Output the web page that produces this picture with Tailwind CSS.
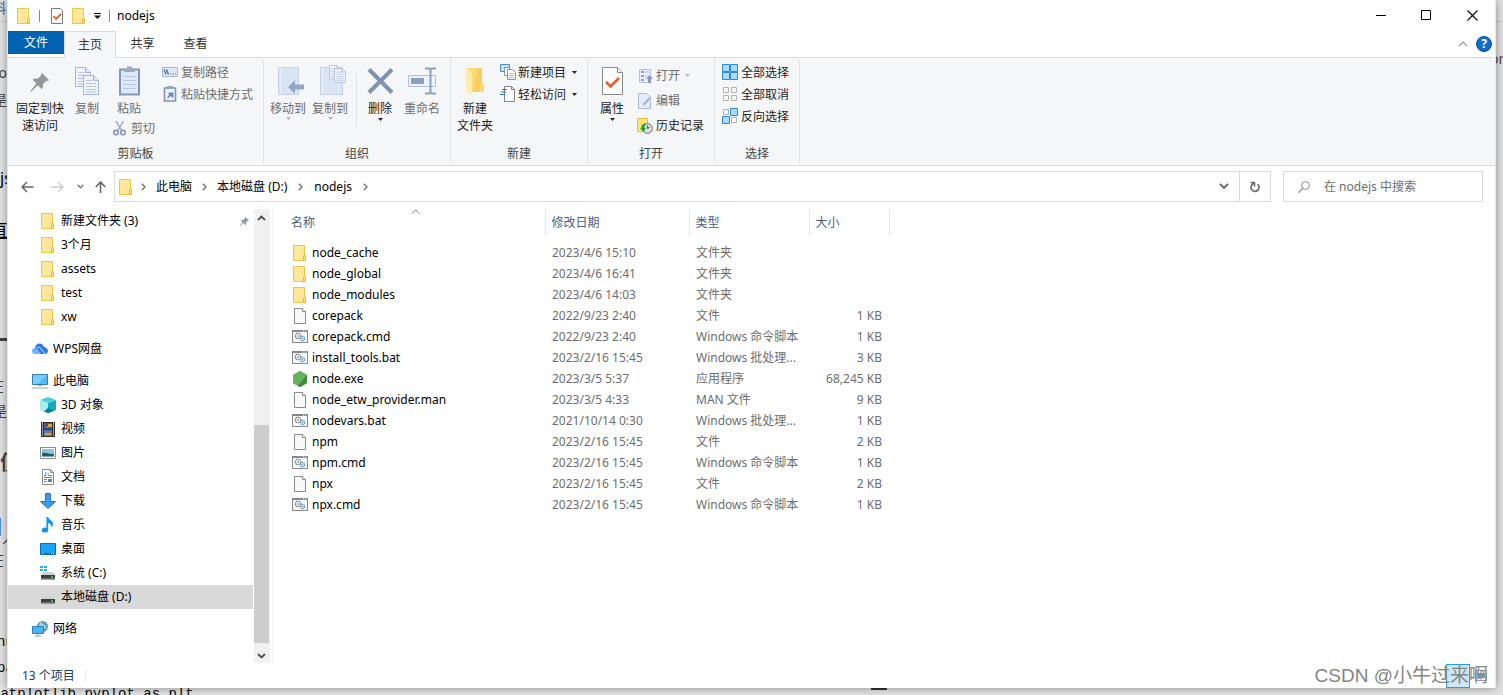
<!DOCTYPE html>
<html lang="zh-CN">
<head>
<meta charset="utf-8">
<title>nodejs</title>
<script src="https://cdn.jsdelivr.net/npm/@tailwindcss/browser@4"></script>
</head>
<body class="bg-[#e4e4e4] font-['Noto_Sans','Noto_Sans_CJK_SC',sans-serif] text-[12px] leading-4 text-black">

<!-- shared icons -->
<svg class="hidden" aria-hidden="true">
  <symbol id="folder" viewBox="0 0 16 16"><path d="M1.500.5h11v10h1v5h-12z" fill="#ffe699" stroke="#eac54f"/><path d="M11.500 15.500v-4l1-1.500 1 1.500v4z" fill="#ffe083" stroke="#e6b93a"/></symbol>
  <symbol id="file" viewBox="0 0 16 16"><path d="M2.500.5h8l3 3v12h-11z" fill="#f8f8f8" stroke="#8a8a8a"/><path d="M10.500.5v3h3" fill="#fff" stroke="#8a8a8a"/></symbol>
  <symbol id="cmd" viewBox="0 0 16 16"><path d="M.5 1.500h15v12H.5z" fill="#f6f7f8" stroke="#85898d"/><path d="M0 1h16v2H0z" fill="#85898d"/><path d="M11 2h1M13 2h1" stroke="#fff"/><circle cx="6" cy="7" r="2.700" fill="#fff" stroke="#7b8085" stroke-width="1.200" stroke-dasharray="1.300 .4"/><circle cx="6" cy="7" r="1" fill="#8f9499"/><circle cx="10.500" cy="9.500" r="2.200" fill="#cfe9f8" stroke="#6a9cbd" stroke-width="1.100" stroke-dasharray="1.300 .4"/><circle cx="10.500" cy="9.500" r=".7" fill="#6a9cbd"/></symbol>
  <symbol id="pin" viewBox="0 0 24 24"><path d="M14 2l8 8-2 1-1-.4-4 4c.6 2 .2 4-1 5.400l-4.500-4.500L2.500 22.500 1.500 22 8 13.500 4 9.500c1.500-1.200 3.400-1.500 5.400-1l4-3.500-.4-1z" fill="#8f999f"/></symbol>
  <symbol id="drop" viewBox="0 0 5 3"><path d="M0 0h5L2.500 3z" fill="currentColor"/></symbol>
  <symbol id="sep" viewBox="0 0 5 8"><path d="M.8.8L4 4 .8 7.200" fill="none" stroke="#6f6f6f" stroke-width="1.300"/></symbol>
  <symbol id="sheet" viewBox="0 0 16 20"><path d="M.5.5h10l5 5v14H.5z" fill="#eef3fa" stroke="#a3b5d0"/><path d="M10.500.5v5h5" fill="#dce6f3" stroke="#a3b5d0"/><path d="M3 5.500h6M3 8.500h10M3 11.500h10M3 14.500h10M3 17h10" stroke="#b5c5dd"/></symbol>
  <symbol id="drive" viewBox="0 0 16 16"><path d="M3 7h10l2 3H1z" fill="#d0d2d3"/><path d="M1 10h14v4.500H1z" fill="#3c4043"/><path d="M1 14h14" stroke="#9a9da0"/><path d="M11 12h2" stroke="#41e04a" stroke-width="1.500"/></symbol>
</svg>

<div class="relative flex min-h-screen overflow-hidden pb-[7px] pl-[7px] pr-[7px]">

  <!-- page lying behind the window -->
  <div class="absolute inset-0 overflow-hidden text-[#444]" aria-hidden="true">
    <span class="absolute left-[-8px] top-0 text-[14px] text-[#4a6a94]">斜</span>
    <span class="absolute left-0 top-[21px] h-px w-full bg-[#cfcfcf]"></span>
    <span class="absolute left-[-10px] top-[65px] text-[14px]">oo</span>
    <span class="absolute left-[-7px] top-[92px] text-[14px]">是</span>
    <span class="absolute left-0 top-[170px] text-[16px] text-black">js</span>
    <span class="absolute left-[-10px] top-[222px] text-[18px] text-black underline">直</span>
    <span class="absolute left-0 top-[338px] h-[3px] w-2 bg-[#444]"></span>
    <span class="absolute left-[-10px] top-[378px] text-[14px]">在</span>
    <span class="absolute left-[-7px] top-[403px] text-[14px]">是</span>
    <span class="absolute left-0 top-[455px] text-[20px] font-bold">便</span>
    <span class="absolute left-0 top-[518px] h-[18px] w-px bg-[#4a90e2]"></span>
    <span class="absolute left-[2px] top-[530px] text-[14px]">人</span>
    <span class="absolute left-[-10px] top-[552px] text-[14px]">在</span>
    <span class="absolute left-[-3px] top-[634px] font-['Liberation_Mono',monospace] text-[14px] text-black">nu</span>
    <span class="absolute left-[-3px] top-[660px] font-['Liberation_Mono',monospace] text-[14px] text-black">pa</span>
    <span class="absolute left-[-8px] top-[686px] font-['Liberation_Mono',monospace] text-[14px] text-black">matplotlib.pyplot as plt</span>
    <span class="absolute left-[871px] top-[688px] h-[2px] w-4 bg-[#333]"></span>
    <span class="absolute left-[1490px] top-[51px] text-[14px]">on</span>
  </div>

  <main class="relative flex min-w-0 flex-1 flex-col border-l border-r border-[#e9e9e9] bg-white shadow-[0_0_9px_rgba(0,0,0,0.4)]">

    <!-- title bar -->
    <header class="flex h-[31px] items-center pl-2">
      <svg class="size-4" viewBox="0 0 16 16"><use href="#folder"/></svg>
      <span class="ml-[7px] h-3 w-px bg-[#8a8a8a]"></span>
      <button class="ml-[9px]" aria-label="属性"><svg class="size-4" viewBox="0 0 16 16"><path d="M2.500.5h9l2 2v13h-11z" fill="#fff" stroke="#7c7c7c"/><path d="M4.500 8l2.500 3L12 6" fill="none" stroke="#f1591d" stroke-width="1.800"/></svg></button>
      <button class="ml-[6px]" aria-label="新建文件夹"><svg class="size-4" viewBox="0 0 16 16"><use href="#folder"/></svg></button>
      <button class="ml-[7px]" aria-label="自定义快速访问工具栏"><svg class="h-[6px] w-[7px]" viewBox="0 0 7 6"><path d="M0 .5h7" stroke="#111"/><path d="M0 2.500h7L3.500 6z" fill="#111"/></svg></button>
      <span class="ml-[8px] h-3 w-px bg-[#8a8a8a]"></span>
      <h1 class="ml-[7px]">nodejs</h1>
      <div class="ml-auto flex h-full">
        <button class="flex w-[46px] items-center justify-center" aria-label="最小化"><svg class="size-[11px]" viewBox="0 0 11 11"><path d="M0 5.500h10" stroke="#000"/></svg></button>
        <button class="flex w-[45px] items-center justify-center" aria-label="最大化"><svg class="size-[11px]" viewBox="0 0 11 11"><path d="M.5.5h9v9h-9z" fill="none" stroke="#000"/></svg></button>
        <button class="flex w-[46px] items-center justify-center" aria-label="关闭"><svg class="size-[11px]" viewBox="0 0 11 11"><path d="M.5.5l10 10M10.500.5l-10 10" stroke="#000" stroke-width="1.100"/></svg></button>
      </div>
    </header>

    <!-- ribbon tabs -->
    <nav class="flex h-[27px] border-b border-[#dadbdc] text-[#333]">
      <button class="h-[23px] w-14 bg-[#0063b1] text-white">文件</button>
      <button class="-mb-px w-[52px] border border-b-0 border-[#dadbdc] bg-[#f5f6f7]">主页</button>
      <button class="w-[53px]">共享</button>
      <button class="w-[53px]">查看</button>
      <div class="ml-auto flex items-center gap-2 pr-[3px]">
        <button aria-label="最小化功能区"><svg class="h-[6px] w-[10px]" viewBox="0 0 10 6"><path d="M1 5l4-4 4 4" fill="none" stroke="#9a9a9a" stroke-width="1.200"/></svg></button>
        <button class="size-4 rounded-full border border-[#0a4d97] bg-[#0b6ed0] text-[12px] leading-[14px] font-bold text-white" aria-label="帮助">?</button>
      </div>
    </nav>

    <!-- ribbon -->
    <div class="flex h-[108px] border-b border-[#dadbdc] bg-[#f5f6f7] py-[2px] leading-[17px] text-[#222]">

      <section class="flex w-64 flex-col border-r border-[#e2e3e4]">
        <div class="flex flex-1 pl-1">
          <button class="flex w-14 flex-col items-center pt-[5px]"><svg class="mb-[7px] mt-[6px] size-[22px]" viewBox="0 0 24 24"><use href="#pin"/></svg><span>固定到快<br>速访问</span></button>
          <button class="flex w-[38px] flex-col items-center pt-[5px] text-[#6d6d6d]"><svg class="mb-[3px] size-8" viewBox="0 0 32 32"><use href="#sheet" x="4" y="2" width="16" height="20"/><use href="#sheet" x="12" y="10" width="16" height="20"/></svg>复制</button>
          <div class="flex flex-col pl-[6px]">
            <div class="flex h-[60px]">
              <button class="flex w-[38px] flex-col items-center pr-1 pt-[5px] text-[#6d6d6d]"><svg class="mb-[3px] size-8 shrink-0" viewBox="0 0 32 32"><path d="M7 4.500h19v25H7z" fill="#dfe8f6" stroke="#8397bd" stroke-width="2"/><path d="M11 7V3.500h3V1.500h5v2h3V7z" fill="#9babc4"/><path d="M10 11.500h13M10 15.500h13M10 19.500h13M10 23.500h13" stroke="#b8c8e3"/></svg>粘贴</button>
              <div class="flex flex-col pl-3 pt-px text-[#6d6d6d]">
                <button class="flex h-[22px] items-center gap-[3px]"><svg class="h-[10px] w-4" viewBox="0 0 16 10"><path d="M.5.5h15v9H.5z" fill="#dce6f5" stroke="#a9b9d2"/><path d="M2 2.500l2 5M4.500 2.500l2 5" stroke="#53698f" stroke-width="1.300"/><path d="M8.500 7h1M11 7h1M13.200 7h1" stroke="#53698f"/></svg>复制路径</button>
                <button class="flex h-[22px] items-center gap-[3px]"><svg class="size-4" viewBox="0 0 16 16"><path d="M2.500 2h11v13h-11z" fill="#eef3fb" stroke="#7f95bd" stroke-width="1.600"/><path d="M5 0h6v3H5z" fill="#93a5c5"/><path d="M5.500 13c0-3 1-4.500 3-4.500h-2v-2h5v5h-2v-2c-1 .5-2 1.500-4 3.500z" fill="#6e86b5"/></svg>粘贴快捷方式</button>
              </div>
            </div>
            <button class="flex h-4 items-center gap-[3px] text-[#6d6d6d]"><svg class="size-4" viewBox="0 0 16 16"><path d="M4 1l6 10M11.500 1L5.500 11" stroke="#a3b1c8" stroke-width="1.500"/><circle cx="4" cy="12.500" r="2.300" fill="none" stroke="#8194b8" stroke-width="1.500"/><circle cx="11" cy="12.500" r="2.300" fill="none" stroke="#8194b8" stroke-width="1.500"/></svg>剪切</button>
          </div>
        </div>
        <h2 class="h-[18px] text-center text-[#444]">剪贴板</h2>
      </section>

      <section class="flex w-[187px] flex-col border-r border-[#e2e3e4]">
        <div class="flex flex-1 pl-[3px] pt-[5px]">
          <button class="flex w-[42px] flex-col items-center text-[#6d6d6d]"><svg class="mb-[3px] size-8" viewBox="0 0 32 32"><path d="M6.500 2.500h20v27h-20z" fill="#d9e4f5" stroke="#c5d3e8"/><path d="M8.500 3v26" stroke="#edf2fa"/><path d="M16 22l7-7v4.500h9v5h-9V29z" fill="#93a6c6"/></svg>移动到<svg class="h-[3px] w-[5px] text-[#b5b5b5]"><use href="#drop"/></svg></button>
          <button class="flex w-[42px] flex-col items-center text-[#6d6d6d]"><svg class="mb-[3px] size-8" viewBox="0 0 32 32"><path d="M6.500 2.500h22v27h-22z" fill="#d9e4f5" stroke="#c5d3e8"/><path d="M8.500 3v26M24.500 20v9" stroke="#edf2fa"/><use href="#sheet" x="15" y="0" width="12" height="15"/><use href="#sheet" x="20" y="3" width="12" height="15"/></svg>复制到<svg class="h-[3px] w-[5px] text-[#b5b5b5]"><use href="#drop"/></svg></button>
          <span class="ml-[5px] mr-[4px] mt-[8px] h-[54px] w-px bg-[#e0e1e2]"></span>
          <button class="flex w-[38px] flex-col items-center"><svg class="mb-[3px] size-8" viewBox="0 0 32 32"><path d="M5 4.500l23 23M28 4.500l-23 23" stroke="#7f92b3" stroke-width="4"/></svg>删除<svg class="mt-px h-[3px] w-[5px]"><use href="#drop"/></svg></button>
          <button class="flex w-[46px] flex-col items-center text-[#6d6d6d]"><svg class="mb-[3px] size-8" viewBox="0 0 32 32"><path d="M2.500 10.500h27v11h-27z" fill="#eef4fc" stroke="#abc1e1"/><path d="M5 13h13v6H5z" fill="#8c9fc4"/><path d="M19 3.500h4l1.500 1 1.500-1h4M19 28.500h4l1.500-1 1.500 1h4M24.500 4v24" fill="none" stroke="#8c9fbe" stroke-width="2"/></svg>重命名</button>
        </div>
        <h2 class="h-[18px] text-center text-[#444]">组织</h2>
      </section>

      <section class="flex w-[137px] flex-col border-r border-[#e2e3e4]">
        <div class="flex flex-1 pl-[3px]">
          <button class="flex w-[42px] flex-col items-center pt-[5px]"><svg class="mb-[3px] size-8" viewBox="0 0 32 32"><path d="M7 3h16v14l2 2v8H7z" fill="#fad978"/><path d="M18 3h5v14l-2 2v8h-7z" fill="#f7cf60"/><path d="M7 3l6 4v23l-6-3z" fill="#ffebb0"/></svg><span>新建<br>文件夹</span></button>
          <div class="flex flex-col pl-1 pt-px">
            <button class="flex h-[22px] items-center gap-[2px]"><svg class="size-4" viewBox="0 0 16 16"><path d="M.5.500h9v7h-9z" fill="#bfe3f5" stroke="#4d8db4"/><path d="M4.500 3.500h5v8h-5z" fill="#fff" stroke="#8b9199"/><path d="M7.500 5.500h5l3 3v7h-8z" fill="#fff" stroke="#8b9199"/><path d="M9 9.500h5M9 11.500h5M9 13.500h5" stroke="#e5a4a0"/></svg>新建项目<svg class="ml-[4px] h-[3px] w-[5px]"><use href="#drop"/></svg></button>
            <button class="flex h-[22px] items-center gap-[2px]"><svg class="size-4" viewBox="0 0 16 16"><path d="M4.500.5h7l3 3v12h-10z" fill="#fff" stroke="#858585"/><path d="M11.500.5v3h3" fill="none" stroke="#858585"/><path d="M2 3.500h5M1 6h5M0 8.500h5" stroke="#2f7bb6" stroke-width="1.200"/></svg>轻松访问<svg class="ml-[4px] h-[3px] w-[5px]"><use href="#drop"/></svg></button>
          </div>
        </div>
        <h2 class="h-[18px] text-center text-[#444]">新建</h2>
      </section>

      <section class="flex w-[127px] flex-col border-r border-[#e2e3e4]">
        <div class="flex flex-1 pl-[3px]">
          <button class="flex w-[42px] flex-col items-center pt-[5px]"><svg class="mb-[3px] size-8" viewBox="0 0 32 32"><path d="M6.500 2.500h15l5 5v22h-20z" fill="#fdfdfd" stroke="#8a8a8a"/><path d="M21.500 2.500v5h5" fill="#eee" stroke="#8a8a8a"/><path d="M10 17l4.500 4.500L23 13" fill="none" stroke="#f05a1a" stroke-width="2.600"/></svg>属性<svg class="mt-px h-[3px] w-[5px]"><use href="#drop"/></svg></button>
          <div class="flex flex-col pl-1 pt-[3px]">
            <button class="flex h-[25px] items-center gap-[3px] text-[#6d6d6d]"><svg class="size-4" viewBox="0 0 16 16"><path d="M2.500 1.500h11v13h-11z" fill="#e8eff9" stroke="#b3c2da"/><path d="M4 3h3v2H4zM4 7h3v2H4zM4 11h3v2H4z" fill="#8ca0c4"/><path d="M8 4h4M8 8h2" stroke="#a8b9d5"/><path d="M9 11l3.500-4L16 11h-2v4h-3v-4z" fill="#8598bd"/></svg>打开<svg class="ml-[2px] h-[3px] w-[5px] text-[#b5b5b5]"><use href="#drop"/></svg></button>
            <button class="flex h-[25px] items-center gap-[3px] text-[#6d6d6d]"><svg class="size-4" viewBox="0 0 16 16"><path d="M1.500.5h8l4 4v11h-12z" fill="#e3ecf9" stroke="#a6b8d5"/><path d="M5 14l1-4 7-7 2 2-7 7z" fill="#a9b8d1" stroke="#f3f6fb" stroke-width=".5"/></svg>编辑</button>
            <button class="flex h-[25px] items-center gap-[3px]"><svg class="size-4" viewBox="0 0 16 16"><path d="M.5.5h10v13H.5z" fill="#ffe27a" stroke="#e6bd42"/><circle cx="10.500" cy="10.500" r="5" fill="#d8dcdf" stroke="#777"/><path d="M10.500 7.500v3l2.500-1.500" fill="none" stroke="#555"/><path d="M8 5.500C4.500 6 4 8.500 4.500 10H3l3.500 4 2.500-4H7.500C7 8 8 7 9.500 6.500z" fill="#25a33b"/></svg>历史记录</button>
          </div>
        </div>
        <h2 class="h-[18px] text-center text-[#444]">打开</h2>
      </section>

      <section class="flex w-[85px] flex-col border-r border-[#e2e3e4]">
        <div class="flex flex-1 flex-col pl-[7px] pt-px">
          <button class="flex h-[22px] items-center gap-[3px]"><svg class="size-4" viewBox="0 0 16 16"><path d="M.5.5h7v7h-7zM8.500.5h7v7h-7zM.5 8.500h7v7h-7zM8.500 8.500h7v7h-7z" fill="#a9dcf9" stroke="#2b88d8"/></svg>全部选择</button>
          <button class="flex h-[22px] items-center gap-[3px]"><svg class="size-4" viewBox="0 0 16 16"><path d="M1.500 1.500h5v5h-5zM9.500 1.500h5v5h-5zM1.500 9.500h5v5h-5zM9.500 9.500h5v5h-5z" fill="#fbfbfb" stroke="#b0b0b0"/></svg>全部取消</button>
          <button class="flex h-[22px] items-center gap-[3px]"><svg class="size-4" viewBox="0 0 16 16"><path d="M1.500 1.500h5v5h-5zM9.500 9.500h5v5h-5z" fill="#fbfbfb" stroke="#b0b0b0"/><path d="M8.500.5h7v7h-7zM.5 8.500h7v7h-7z" fill="#a9dcf9" stroke="#2b88d8"/></svg>反向选择</button>
        </div>
        <h2 class="h-[18px] text-center text-[#444]">选择</h2>
      </section>
    </div>

    <!-- address row -->
    <div class="flex items-center pb-[5px] pl-[13px] pr-3 pt-[5px]">
      <button aria-label="后退"><svg class="h-3 w-[13px]" viewBox="0 0 13 12"><path d="M12.500 6H1M6 1L1 6l5 5" fill="none" stroke="#666" stroke-width="1.500"/></svg></button>
      <button class="ml-[17px]" aria-label="前进"><svg class="h-3 w-[13px]" viewBox="0 0 13 12"><path d="M0 6h12M7 1l5 5-5 5" fill="none" stroke="#ccc" stroke-width="1.400"/></svg></button>
      <button class="ml-[13px]" aria-label="最近浏览的位置"><svg class="h-[5px] w-[7px]" viewBox="0 0 7 5"><path d="M.7.700l2.800 3 2.800-3" fill="none" stroke="#777" stroke-width="1.400"/></svg></button>
      <button class="ml-[11px]" aria-label="上移"><svg class="h-3 w-[11px]" viewBox="0 0 11 12"><path d="M5.500 12V1M.8 6l4.700-5 4.700 5" fill="none" stroke="#666" stroke-width="1.600"/></svg></button>
      <div class="ml-2 flex h-[31px] flex-1 items-center border border-[#d9d9d9] pl-[3px]">
        <svg class="size-4" viewBox="0 0 16 16"><use href="#folder"/></svg>
        <svg class="ml-[7px] h-2 w-[5px]"><use href="#sep"/></svg>
        <a href="#" class="ml-[10px]">此电脑</a>
        <svg class="ml-[10px] h-2 w-[5px]"><use href="#sep"/></svg>
        <a href="#" class="ml-[10px]">本地磁盘 (D:)</a>
        <svg class="ml-[11px] h-2 w-[5px]"><use href="#sep"/></svg>
        <a href="#" class="ml-[11px]">nodejs</a>
        <svg class="ml-[11px] h-2 w-[5px]"><use href="#sep"/></svg>
        <button class="ml-auto flex h-full w-[30px] items-center justify-center" aria-label="上一个位置"><svg class="h-[7px] w-[10px]" viewBox="0 0 10 7"><path d="M1 1l4 4 4-4" fill="none" stroke="#666" stroke-width="1.800"/></svg></button>
        <button class="flex h-full w-[31px] items-center justify-center border-l border-[#d9d9d9]" aria-label="刷新"><svg class="size-3" viewBox="0 0 12 12"><path d="M8.500 3.200A4 4 0 1 1 3 3.700L5 2" fill="none" stroke="#6a6a6a" stroke-width="1.700"/><path d="M1.500 1.500H5.500v4" fill="none" stroke="#6a6a6a" stroke-width="1.500"/></svg></button>
      </div>
      <label class="ml-3 flex h-[31px] w-[200px] items-center border border-[#d9d9d9] pl-[14px]">
        <svg class="size-3 shrink-0" viewBox="0 0 12 12"><circle cx="7.500" cy="4.500" r="3.900" fill="none" stroke="#888"/><path d="M5 7.200L.5 11.700" stroke="#888" stroke-width="1.200"/></svg>
        <input type="search" aria-label="搜索" placeholder="在 nodejs 中搜索" class="ml-[14px] w-full min-w-0 outline-none placeholder:text-[#6d6d6d]">
      </label>
    </div>

    <!-- body -->
    <div class="flex flex-1 pt-[2px]">
      <nav class="w-[245px] leading-6" aria-label="导航窗格">
        <ul>
          <li class="flex h-6 items-center gap-[5px] pl-8 pr-[3px]"><svg class="size-4" viewBox="0 0 16 16"><use href="#folder"/></svg><a href="#">新建文件夹 (3)</a><svg class="ml-auto size-[11px]" viewBox="0 0 24 24"><use href="#pin"/></svg></li>
          <li class="flex h-6 items-center gap-[5px] pl-8"><svg class="size-4" viewBox="0 0 16 16"><use href="#folder"/></svg><a href="#">3个月</a></li>
          <li class="flex h-6 items-center gap-[5px] pl-8"><svg class="size-4" viewBox="0 0 16 16"><use href="#folder"/></svg><a href="#">assets</a></li>
          <li class="flex h-6 items-center gap-[5px] pl-8"><svg class="size-4" viewBox="0 0 16 16"><use href="#folder"/></svg><a href="#">test</a></li>
          <li class="flex h-6 items-center gap-[5px] pl-8"><svg class="size-4" viewBox="0 0 16 16"><use href="#folder"/></svg><a href="#">xw</a></li>
          <li class="mt-2 flex h-6 items-center gap-[5px] pl-6"><svg class="size-4" viewBox="0 0 16 16"><path d="M3.500 13a3 3 0 0 1-.5-5.500C3 4.500 5 2.500 7.500 2.500c2 0 3.500 1 4.200 3C14 6 16 8 16 10s-1.500 3-3 3z" fill="#2b7cf0"/><path d="M3 13a3 3 0 0 1 0-6c3 0 3.500 3 6 6z" fill="#6fb2ff"/><path d="M5 7c1-1 2.500-1 3.500 0l4.500 6" fill="none" stroke="#fff" stroke-width=".8"/></svg><a href="#">WPS网盘</a></li>
          <li class="mt-2 flex h-6 items-center gap-[5px] pl-6"><svg class="size-4" viewBox="0 0 16 16"><path d="M.5 1.500h15v10H.5z" fill="#4fbaf8" stroke="#3a7ca8"/><path d="M1 2h14L6 11H1z" fill="#79cdfb"/><path d="M6 12.500h4M0 15h16" stroke="#8ea3b2"/></svg><a href="#">此电脑</a></li>
          <li class="flex h-6 items-center gap-[5px] pl-8"><svg class="size-4" viewBox="0 0 16 16"><path d="M0 3l8-3 8 3-8 3z" fill="#45d2de"/><path d="M0 3l8 3v10l-8-3z" fill="#a9ebef"/><path d="M16 3L8 6v10l8-3z" fill="#12aabe"/><path d="M8 11l6 3-6 2-4-1.500z" fill="#077d91"/></svg><a href="#">3D 对象</a></li>
          <li class="flex h-6 items-center gap-[5px] pl-8"><svg class="size-4" viewBox="0 0 16 16"><path d="M1 1h14v15H1z" fill="#333"/><path d="M2.500 1.500v14M13.500 1.500v14" stroke="#fff" stroke-dasharray="1 1"/><path d="M4 2h8v6H4z" fill="#375a9b"/><path d="M4 9h8v6H4z" fill="#4e79be"/><path d="M8 3h4v3H8zM5 12h6v2H5z" fill="#d7a63a"/><path d="M6 5h2v2H6zM9 10h2v2H9z" fill="#d94f3a"/></svg><a href="#">视频</a></li>
          <li class="flex h-6 items-center gap-[5px] pl-8"><svg class="size-4" viewBox="0 0 16 16"><path d="M.5 2.500h15v11H.5z" fill="#fff" stroke="#8d8d8d"/><path d="M2 4h12v8H2z" fill="#8dc2ee"/><path d="M2 8c4-1 7 1 12 1v3H2z" fill="#315c54"/><path d="M2 11h12v1H2z" fill="#77a5c9"/></svg><a href="#">图片</a></li>
          <li class="flex h-6 items-center gap-[5px] pl-8"><svg class="size-4" viewBox="0 0 16 16"><path d="M2.500.5h8l3 3v12h-11z" fill="#fff" stroke="#8a8a8a"/><path d="M10.500.5v3h3" fill="none" stroke="#8a8a8a"/><path d="M4 6.500h2M8 4.500h1M8 6.500h4M4 8.500h8M4 10.500h3M4 12.500h3M6 3v3" stroke="#2398de"/><path d="M8 10h4v3H8z" fill="#4b8ba8"/></svg><a href="#">文档</a></li>
          <li class="flex h-6 items-center gap-[5px] pl-8"><svg class="size-4" viewBox="0 0 16 16"><path d="M5.500.5h5v8h5L8 15.500.5 8.500h5z" fill="#3b9aec" stroke="#2476c0"/></svg><a href="#">下载</a></li>
          <li class="flex h-6 items-center gap-[5px] pl-8"><svg class="size-4" viewBox="0 0 16 16"><ellipse cx="5" cy="13" rx="3.200" ry="2.600" fill="#0b94f2"/><path d="M6.500 0h1.800c0 3 4.700 3.500 4.700 7 0 1.500-.7 2.800-1.800 3.800C12 8 10 6.500 8.200 6v7H6.500z" fill="#0b94f2"/></svg><a href="#">音乐</a></li>
          <li class="flex h-6 items-center gap-[5px] pl-8"><svg class="size-4" viewBox="0 0 16 16"><path d="M.5 2.500h15v11H.5z" fill="#1ba1fa" stroke="#0b6fb8"/><path d="M1 12.500h14" stroke="#0b6fb8"/><path d="M2 12.500h1M11 12.500h1M13 12.500h1" stroke="#fff"/></svg><a href="#">桌面</a></li>
          <li class="flex h-6 items-center gap-[5px] pl-8"><svg class="size-4" viewBox="0 0 16 16"><use href="#drive"/><path d="M0 1h3v2H0zM4 1h3v2H4zM0 4h3v2H0zM4 4h3v2H4z" fill="#19b4f1"/></svg><a href="#">系统 (C:)</a></li>
          <li class="flex h-6 items-center gap-[5px] bg-[#d9d9d9] pl-8"><svg class="size-4" viewBox="0 0 16 16"><use href="#drive"/></svg><a href="#">本地磁盘 (D:)</a></li>
          <li class="mt-2 flex h-6 items-center gap-[5px] pl-6"><svg class="size-4" viewBox="0 0 16 16"><circle cx="10.500" cy="5.500" r="5.500" fill="#5c9dba"/><path d="M8 1c3 0 2 3 5 3l1 3-3 2-4-4z" fill="#a8d3e2"/><path d="M.5 5.500h11v7H.5z" fill="#4bb4f5" stroke="#2d7fb3"/><path d="M3 15h6M6 13v2" stroke="#8fa3b0"/></svg><a href="#">网络</a></li>
        </ul>
      </nav>

      <!-- navigation scroll bar -->
      <div class="ml-px flex w-4 flex-col bg-[#f0f0f0]">
        <button class="flex h-[17px] items-center justify-center pr-px" aria-label="向上滚动"><svg class="h-[6px] w-[9px]" viewBox="0 0 9 6"><path d="M1 5l3.500-3.500L8 5" fill="none" stroke="#505050" stroke-width="1.800"/></svg></button>
        <span class="flex-[199]"></span>
        <span class="mr-px flex-[218] bg-[#cdcdcd]"></span>
        <button class="flex h-[20px] items-center justify-center pr-px pt-[5px]" aria-label="向下滚动"><svg class="h-[6px] w-[9px]" viewBox="0 0 9 6"><path d="M1 1l3.500 3.500L8 1" fill="none" stroke="#505050" stroke-width="1.800"/></svg></button>
      </div>
      <div class="ml-[2px] w-px bg-[#f3f3f3]"></div>

      <!-- file list -->
      <div class="relative flex-1 pl-[11px]">
        <svg class="absolute left-[138px] top-0 h-[5px] w-[9px]" viewBox="0 0 9 5"><path d="M.8 4.500l3.700-3.700 3.700 3.700" fill="none" stroke="#777"/></svg>
        <table class="w-[605px] table-fixed border-collapse text-left leading-[21px] text-[#6d6d6d]">
          <colgroup><col class="w-[261px]"><col class="w-[144px]"><col class="w-[120px]"><col class="w-[80px]"></colgroup>
          <thead>
            <tr class="h-[27px] text-[#4c607a]">
              <th class="border-r border-[#e5e5e5] pl-[7px] font-normal">名称</th>
              <th class="border-r border-[#e5e5e5] pl-[6px] font-normal">修改日期</th>
              <th class="border-r border-[#e5e5e5] pl-[6px] font-normal">类型</th>
              <th class="border-r border-[#e5e5e5] pl-[6px] font-normal">大小</th>
            </tr>
          </thead>
          <tbody id="files">
            <tr class="h-[6px]"><td colspan="4"></td></tr>
          </tbody>
        </table>
      </div>
    </div>

    <!-- status bar -->
    <footer class="mt-px flex h-6 items-center pl-[14px] text-[#1e395b]">
      <span>13 个项目</span><span class="ml-[10px] h-3 w-px bg-[#e8e8e8]"></span>
      <div class="relative ml-auto flex h-full items-center pr-[7px]">
        <button class="absolute right-[25px] top-0 size-6 border border-[#26a0da] bg-[#cbe8f6]" aria-label="详细信息"></button>
        <button class="absolute right-[8px] top-[6px]" aria-label="大图标"><svg class="h-[11px] w-3" viewBox="0 0 12 11"><path d="M.5.500h11v10H.5z" fill="#fff" stroke="#8c9aa8"/><path d="M2 3h8v5H2z" fill="#62a5e0"/></svg></button>
        <span class="relative font-['Liberation_Sans','Noto_Sans_CJK_SC',sans-serif] text-[19px] leading-6 text-[#858585]">CSDN @小牛过来啊</span>
      </div>
    </footer>
  </main>
</div>

<script>
  const files = [
    ['folder', 'node_cache', '2023/4/6 15:10', '文件夹', ''],
    ['folder', 'node_global', '2023/4/6 16:41', '文件夹', ''],
    ['folder', 'node_modules', '2023/4/6 14:03', '文件夹', ''],
    ['file', 'corepack', '2022/9/23 2:40', '文件', '1 KB'],
    ['cmd', 'corepack.cmd', '2022/9/23 2:40', 'Windows 命令脚本', '1 KB'],
    ['cmd', 'install_tools.bat', '2023/2/16 15:45', 'Windows 批处理...', '3 KB'],
    ['node', 'node.exe', '2023/3/5 5:37', '应用程序', '68,245 KB'],
    ['file', 'node_etw_provider.man', '2023/3/5 4:33', 'MAN 文件', '9 KB'],
    ['cmd', 'nodevars.bat', '2021/10/14 0:30', 'Windows 批处理...', '1 KB'],
    ['file', 'npm', '2023/2/16 15:45', '文件', '2 KB'],
    ['cmd', 'npm.cmd', '2023/2/16 15:45', 'Windows 命令脚本', '1 KB'],
    ['file', 'npx', '2023/2/16 15:45', '文件', '2 KB'],
    ['cmd', 'npx.cmd', '2023/2/16 15:45', 'Windows 命令脚本', '1 KB']
  ];
  const nodeIcon = '<path d="M8 0l7 4v8l-7 4-7-4V4z" fill="#4a9b45"/><path d="M8 0l7 4-9 11-5-3V4z" fill="#65b25a"/><path d="M15 4v8l-7 4-2-1z" fill="#3d8b3d"/>';
  document.getElementById('files').insertAdjacentHTML('beforeend', files.map(([icon, name, date, type, size]) => `
    <tr class="h-[21px]">
      <td class="pl-2 text-black"><a href="#" class="flex items-center gap-1"><svg class="size-4" viewBox="0 0 16 16">${icon === 'node' ? nodeIcon : `<use href="#${icon}"/>`}</svg>${name}</a></td>
      <td class="pl-[7px]">${date}</td>
      <td class="whitespace-nowrap pl-[7px]">${type}</td>
      <td class="whitespace-nowrap pr-[7px] text-right">${size}</td>
    </tr>`).join(''));
</script>
</body>
</html>
